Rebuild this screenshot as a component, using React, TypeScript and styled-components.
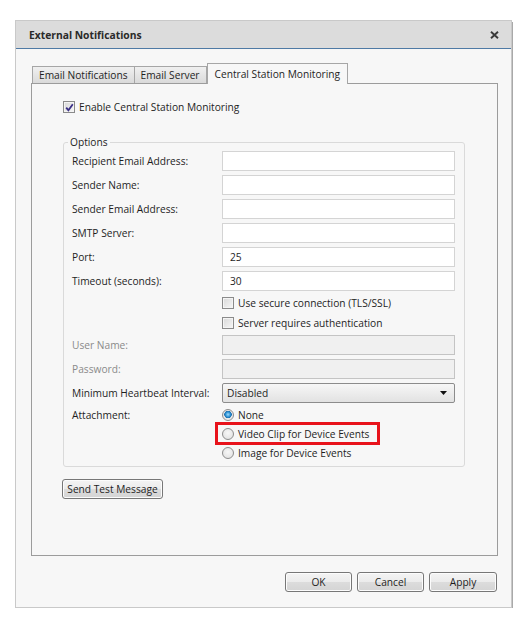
import React from "react";
import styled, { createGlobalStyle, css } from "styled-components";

const GlobalStyle = createGlobalStyle`
  html, body { margin: 0; padding: 0; background: #ffffff; }
  body { font-family: "Open Sans", "Noto Sans", sans-serif; font-size: 10.2px; color: #1e1e1e; }
  * { box-sizing: border-box; }
`;

const Dialog = styled.div`
  margin: 20px 0 0 15px;
  width: 497px;
  height: 588px;
  border: 1px solid #c9c9c9;
  box-shadow: 1px 2px 0 #a9a9a9;
  background: #f7f7f7;
  display: flex;
  flex-direction: column;
`;

const TitleBar = styled.div`
  height: 28px;
  flex: none;
  background: #dcdcdc;
  border-bottom: 1px solid #4f7aa5;
  display: flex;
  align-items: center;
  justify-content: space-between;
  padding: 0 12px 0 13px;
  font-weight: 700;
  font-size: 10.3px;
  color: #2a2a2a;
`;

const CloseButton = styled.button`
  border: 0;
  background: none;
  padding: 0;
  width: 10px;
  height: 10px;
  display: flex;
  align-items: center;
  justify-content: center;
  cursor: pointer;
`;

const Body = styled.div`
  flex: 1;
  padding: 14px 13px 0 15px;
  display: flex;
  flex-direction: column;
`;

const TabList = styled.div`
  display: flex;
  align-items: flex-end;
  height: 20px;
  padding-left: 1px;
`;

const Tab = styled.div<{ $active?: boolean }>`
  height: 17px;
  padding: 0 6px;
  display: flex;
  align-items: center;
  border: 1px solid #a6a6a6;
  border-bottom: none;
  background: linear-gradient(#f0f0f0, #dadada);
  color: #1e1e1e;
  white-space: nowrap;
  & + & { border-left: none; }
  ${(p) =>
    p.$active &&
    css`
      height: 21px;
      margin-bottom: -1px;
      background: #f7f7f7;
      position: relative;
      z-index: 1;
      padding: 0 7px;
      border-left: 1px solid #a6a6a6 !important;
    `}
`;

const Panel = styled.div`
  height: 473px;
  border: 1px solid #9c9c9c;
  background: #f7f7f7;
  padding: 15px 0 0 31px;
  display: flex;
  flex-direction: column;
  align-items: flex-start;
`;

const CheckRow = styled.label<{ $disabled?: boolean }>`
  display: flex;
  align-items: center;
  gap: 4px;
  height: 16px;
  white-space: nowrap;
  color: ${(p) => (p.$disabled ? "#8a8a8a" : "#1e1e1e")};
`;

const CheckBox = styled.span<{ $checked?: boolean }>`
  width: 12px;
  height: 12px;
  flex: none;
  border: 1px solid #8a8a8a;
  background: linear-gradient(135deg, #d8d8d8, #f6f6f6);
  box-shadow: inset 0 0 0 1px #f4f4f4;
  display: flex;
  align-items: center;
  justify-content: center;
`;

const Group = styled.fieldset`
  margin: 20px 0 0 0;
  width: 402px;
  border: 1px solid #dadada;
  border-radius: 3px;
  padding: 0 8px 4px 8px;
  display: grid;
  grid-template-columns: 150px 233px;
  align-items: center;
`;

const Legend = styled.legend`
  padding: 0 2px;
  margin-left: -4px;
  line-height: 14px;
  font-size: 10.2px;
  color: #1e1e1e;
`;

const Label = styled.div<{ $h: number; $disabled?: boolean }>`
  height: ${(p) => p.$h}px;
  display: flex;
  align-items: center;
  white-space: nowrap;
  color: ${(p) => (p.$disabled ? "#8a8a8a" : "#1e1e1e")};
`;

const Cell = styled.div<{ $h: number }>`
  height: ${(p) => p.$h}px;
  display: flex;
  align-items: center;
`;

const TextInput = styled.input`
  width: 233px;
  height: 20px;
  border: 1px solid #d4d4d4;
  background: #ffffff;
  padding: 0 7px;
  font: inherit;
  color: #1e1e1e;
  outline: none;
  &:disabled { background: #f0f0f0; border-color: #c4c4c4; }
`;

const Select = styled.div`
  width: 233px;
  height: 20px;
  border: 1px solid #8c8c8c;
  border-radius: 2px;
  background: linear-gradient(#f7f7f7, #e2e2e2);
  padding: 0 7px 0 4px;
  display: flex;
  align-items: center;
  justify-content: space-between;
`;

const RadioRow = styled.label<{ $highlight?: boolean }>`
  display: flex;
  align-items: center;
  gap: 4px;
  white-space: nowrap;
  ${(p) =>
    p.$highlight &&
    css`
      border: 3px solid #e8131b;
      height: 23px;
      margin: -2px 0 -2px -7px;
      padding: 0 8px 0 4px;
    `}
`;

const Radio = styled.span<{ $checked?: boolean }>`
  width: 12px;
  height: 12px;
  border-radius: 50%;
  flex: none;
  border: 1px solid #8d8d8d;
  background: ${(p) =>
    p.$checked
      ? "radial-gradient(circle at 50% 45%, #9fdcff 0, #2b8fd0 2.5px, #1f6fae 3.5px, #e6e6e6 4px, #f7f7f7 100%)"
      : "radial-gradient(circle at 50% 40%, #f7f7f7 0, #dedede 100%)"};
`;

const Button = styled.button<{ $w: number }>`
  width: ${(p) => p.$w}px;
  height: 20px;
  border: 1px solid #777;
  border-radius: 3px;
  background: linear-gradient(#f4f4f4 0%, #ebebeb 50%, #dcdcdc 51%, #d4d4d4 100%);
  font: inherit;
  color: #1e1e1e;
  padding: 0;
  box-shadow: inset 0 0 0 1px #fcfcfc;
`;

const TestButton = styled(Button)`
  margin: 12px 0 0 -1px;
`;

const Footer = styled.div`
  margin-top: 16px;
  display: flex;
  justify-content: flex-end;
  gap: 5px;
  padding-right: 1px;
`;

const Check = () => (
  <svg width="9" height="9" viewBox="0 0 9 9">
    <path d="M1.2 4.6 L3.4 7.2 L7.8 1.2" fill="none" stroke="#3a2f86" strokeWidth="1.8" />
  </svg>
);

const fields = [
  { label: "Recipient Email Address:", value: "" },
  { label: "Sender Name:", value: "" },
  { label: "Sender Email Address:", value: "" },
  { label: "SMTP Server:", value: "" },
  { label: "Port:", value: "25" },
  { label: "Timeout (seconds):", value: "30" },
];

export default function App() {
  return (
    <>
      <GlobalStyle />
      <Dialog>
        <TitleBar>
          <span>External Notifications</span>
          <CloseButton aria-label="Close">
            <svg width="9" height="8" viewBox="0 0 9 8">
              <path d="M1 0.8 L8 7.2 M8 0.8 L1 7.2" stroke="#3a3a3a" strokeWidth="1.9" />
            </svg>
          </CloseButton>
        </TitleBar>
        <Body>
          <TabList>
            <Tab>Email Notifications</Tab>
            <Tab>Email Server</Tab>
            <Tab $active>Central Station Monitoring</Tab>
          </TabList>
          <Panel>
            <CheckRow>
              <CheckBox $checked>
                <Check />
              </CheckBox>
              Enable Central Station Monitoring
            </CheckRow>
            <Group>
              <Legend>Options</Legend>
              {fields.map((f) => (
                <React.Fragment key={f.label}>
                  <Label $h={24}>{f.label}</Label>
                  <Cell $h={24}>
                    <TextInput defaultValue={f.value} />
                  </Cell>
                </React.Fragment>
              ))}
              <Label $h={20} />
              <Cell $h={20}>
                <CheckRow>
                  <CheckBox />
                  Use secure connection (TLS/SSL)
                </CheckRow>
              </Cell>
              <Label $h={20} />
              <Cell $h={20}>
                <CheckRow>
                  <CheckBox />
                  Server requires authentication
                </CheckRow>
              </Cell>
              <Label $h={24} $disabled>User Name:</Label>
              <Cell $h={24}>
                <TextInput disabled />
              </Cell>
              <Label $h={24} $disabled>Password:</Label>
              <Cell $h={24}>
                <TextInput disabled type="password" />
              </Cell>
              <Label $h={24}>Minimum Heartbeat Interval:</Label>
              <Cell $h={24}>
                <Select>
                  <span>Disabled</span>
                  <svg width="7" height="4" viewBox="0 0 7 4">
                    <path d="M0 0 H7 L3.5 4 Z" fill="#111" />
                  </svg>
                </Select>
              </Cell>
              <Label $h={19}>Attachment:</Label>
              <Cell $h={19}>
                <RadioRow>
                  <Radio $checked />
                  None
                </RadioRow>
              </Cell>
              <Label $h={19} />
              <Cell $h={19}>
                <RadioRow $highlight>
                  <Radio />
                  Video Clip for Device Events
                </RadioRow>
              </Cell>
              <Label $h={19} />
              <Cell $h={19}>
                <RadioRow>
                  <Radio />
                  Image for Device Events
                </RadioRow>
              </Cell>
            </Group>
            <TestButton $w={101}>Send Test Message</TestButton>
          </Panel>
          <Footer>
            <Button $w={67}>OK</Button>
            <Button $w={67}>Cancel</Button>
            <Button $w={68}>Apply</Button>
          </Footer>
        </Body>
      </Dialog>
    </>
  );
}
